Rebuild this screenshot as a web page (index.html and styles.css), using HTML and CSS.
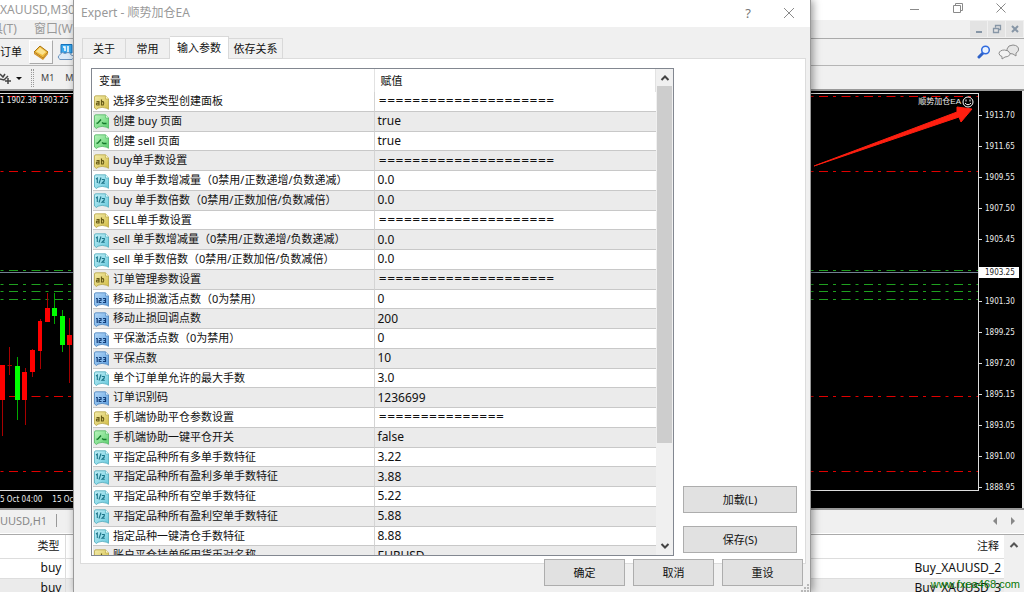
FILE: index.html
```html
<!DOCTYPE html>
<html lang="zh-CN">
<head>
<meta charset="utf-8">
<title>Expert - 顺势加仓EA</title>
<link rel="stylesheet" href="styles.css">
</head>
<body>
<svg class="defs" aria-hidden="true">
  <defs>
    <linearGradient id="gy" x2="1" y2="1"><stop offset="0" stop-color="#f3ecab"/><stop offset="1" stop-color="#d3bd45"/></linearGradient>
    <linearGradient id="gg" x2="1" y2="1"><stop offset="0" stop-color="#b9f5bd"/><stop offset="1" stop-color="#5fd070"/></linearGradient>
    <linearGradient id="gc" x2="1" y2="1"><stop offset="0" stop-color="#c3f0f7"/><stop offset="1" stop-color="#67c8dc"/></linearGradient>
    <linearGradient id="gb" x2="1" y2="1"><stop offset="0" stop-color="#b4d8f8"/><stop offset="1" stop-color="#5e9fe0"/></linearGradient>
    <path id="sheet" d="M.5 2Q.5.8 2 .8H11.5L14.5 4V14.3L12.5 13.2Q8 11.5 4 13.2L2.5 14.5L.5 13Z"/>
    <symbol id="i-str" viewBox="0 0 15 15"><use href="#sheet" fill="url(#gy)" stroke="#b5a343" stroke-width=".8"/><path d="M11.5.8V4H14.5" fill="#fff8c8" stroke="#b5a343" stroke-width=".6"/><path d="M2.5 6.5H5V10H3.2Q2 9.500 2.700 8.200H5M7.500 4.500V10H9.200Q10.500 8.500 9.200 6.600H7.500" fill="none" stroke="#665a18" stroke-width="1.2"/></symbol>
    <symbol id="i-bool" viewBox="0 0 15 15"><use href="#sheet" fill="url(#gg)" stroke="#4fb561" stroke-width=".8"/><path d="M11.500.800V4H14.500" fill="#d8ffdc" stroke="#4fb561" stroke-width=".6"/><path d="M2.500 9.500L4 9L7 5.500M8 8.500L9.500 9.500H12.500" fill="none" stroke="#157a2c" stroke-width="1.400"/></symbol>
    <symbol id="i-dbl" viewBox="0 0 15 15"><use href="#sheet" fill="url(#gc)" stroke="#4ba9bb" stroke-width=".8"/><path d="M11.500.800V4H14.500" fill="#e0fbff" stroke="#4ba9bb" stroke-width=".6"/><path d="M2 5L3.300 4V9M7 3.500L5 9.500M7.800 5.500H10.300V7L8 9.300H10.800" fill="none" stroke="#1c7488" stroke-width="1.100"/></symbol>
    <symbol id="i-int" viewBox="0 0 15 15"><use href="#sheet" fill="url(#gb)" stroke="#4781bd" stroke-width=".8"/><path d="M11.500.800V4H14.500" fill="#d8ecff" stroke="#4781bd" stroke-width=".6"/><path d="M2 6.500H3.200V11M5 6.500H7V8.500H5.200V10.500H7.500M9 6.500H11.500V10.500H9M9.500 8.500H11.500" fill="none" stroke="#143e78" stroke-width="1.200"/></symbol>
  </defs>
</svg>

<main class="app">
  <header class="titlebar">
    <span>XAUUSD,M30</span>
    <div class="winbtns">
      <button aria-label="最小化"><svg width="12" height="12"><path d="M1 7.500H10"/></svg></button>
      <button aria-label="还原"><svg width="12" height="12"><path d="M1.500 3.500H8.500V10.500H1.500ZM3.500 3V1.500H10.500V8.500H9"/></svg></button>
      <button aria-label="关闭"><svg width="12" height="12"><path d="M1.500 1.500L10.500 10.500M10.500 1.500L1.500 10.500"/></svg></button>
    </div>
  </header>
  <nav class="menubar">
    <div class="menus"><button class="cut">具(T)</button><button>窗口(W)</button></div>
    <div class="mdi">
      <button aria-label="最小化子窗口"><svg width="10" height="10"><path d="M2 8H8"/></svg></button>
      <button aria-label="还原子窗口"><svg width="10" height="10"><path d="M3.500 3.500V1.500H8.500V5.500H7M1.500 4.500H6.500V8.500H1.500Z" stroke-width="1.300"/></svg></button>
      <button aria-label="关闭子窗口"><svg width="10" height="10"><path d="M2 2L8 8M8 2L2 8"/></svg></button>
    </div>
  </nav>
  <div class="toolbar">
    <button>订单</button>
    <button class="framed" aria-label="市场"><svg width="18" height="18" viewBox="0 0 18 18"><path d="M2 9L8 3L16 9L11 15Z" fill="#f0bb3a" stroke="#a97312"/><path d="M4 8.500L8 4.500L14 9L10.500 12Z" fill="#fbe28e"/><path d="M2 9.500L11 15L16 9.500V11L11 17L2 11Z" fill="#d3942a"/></svg></button>
    <button aria-label="信号"><svg width="18" height="18" viewBox="0 0 18 18"><path d="M4 1.500H15V10H4Z" fill="#3aa8ec" stroke="#1673bd"/><path d="M6 4H8V8M11 3V9" stroke="#fff" stroke-width="1.500" fill="none"/><path d="M3 16.500Q-.5 14 3 11.500Q5 8 8 10.500Q13 8 14 12Q19 13 15 16.500Z" fill="#dcebf8" stroke="#6b93bd"/></svg></button>
    <span class="spacer"></span>
    <button aria-label="搜索"><svg width="14" height="14" viewBox="0 0 14 14"><path d="M2 12L6 8" stroke="#2f62c8" stroke-width="3" stroke-linecap="round"/><circle cx="8.500" cy="5" r="3.800" fill="#eaf3ff" stroke="#2f6ade" stroke-width="1.500"/></svg></button>
    <button aria-label="消息"><svg width="22" height="16" viewBox="0 0 22 16"><path d="M18 9V12L15 10Q8 9.500 9 5Q10 1 15 1Q21 1.500 20.500 6Q20 8 18 9Z" fill="#e6e6e6" stroke="#8c8c8c"/><path d="M4 12.500V15L7 13Q12 12.500 12 9.500Q11 6 6.500 6Q1.500 6 1 9.500Q1.500 12 4 12.500Z" fill="#f2f2f2" stroke="#8c8c8c"/></svg></button>
  </div>
  <div class="toolbar periods">
    <button aria-label="指标"><svg width="24" height="16" viewBox="0 0 24 16"><path d="M0 4L3 7L5 4M0 9L4 10L8 6M8 8V14M5 11H11" stroke="#444" stroke-width="1.500" fill="none"/><path d="M16 7H22L19 10Z" fill="#111"/></svg></button>
    <span class="grip"></span>
    <button>M1</button><button>M5</button>
  </div>

  <section class="chart">
    <div class="plot">
      <svg class="lines" width="100%" height="396">
        <g stroke="#e00000" stroke-dasharray="9 5 3 5.500" stroke-dashoffset="13.500">
          <path d="M0 2.500H4000"/><path d="M0 77.500H4000"/><path d="M0 302.500H4000"/><path d="M0 377.500H4000"/>
        </g>
        <g stroke="#1fa01f" stroke-dasharray="9 5 3 5.500" stroke-dashoffset="13.500">
          <path d="M0 176.500H4000"/><path d="M0 190.500H4000"/><path d="M0 197.500H4000"/><path d="M0 205.500H4000"/>
        </g>
        <path d="M0 178.500H4000" stroke="#708090"/>
        <g transform="translate(0 -94)">
          <path d="M2.500 365V436M9.500 347V375M7.500 365.500H12M25.500 368V425M32.500 349V377M40.500 319V369M47.500 293V308M69.500 318V383" stroke="#a80000"/>
          <path d="M17.500 357V420M54.500 293V324M62.500 310V352" stroke="#00a800"/>
          <path d="M0 365H5V400H0ZM22 372H27V400H22ZM30 350H35V372H30ZM38 321H42V351H38ZM45 308H50V322H45ZM67 335H72V345H67Z" fill="#f00"/>
          <path d="M15 366H20V400H15ZM52 308H57V316H52ZM60 316H65V345H60Z" fill="#0f0"/>
        </g>
      </svg>
      <span class="quote">1 1902.38 1903.25</span>
      <span class="ea">顺势加仓EA <svg width="12" height="12" viewBox="0 0 12 12"><circle cx="6" cy="6" r="5" fill="none" stroke="#fff"/><path d="M4 3.500V5.500M8 3.500V5.500M3 7Q6 10.500 9 7" stroke="#fff" fill="none"/></svg></span>
      <svg class="arrow" width="170" height="80"><path d="M6 72L149 18L149 13L164 15L153 28L151 23Z" fill="#ff1f10" stroke="#ff1f10"/></svg>
    </div>
    <ol class="prices">
      <li>1913.70</li><li>1911.65</li><li>1909.55</li><li>1907.50</li><li>1905.45</li>
      <li class="now"><b>1903.25</b></li>
      <li>1901.30</li><li>1899.25</li><li>1897.20</li><li>1895.15</li><li>1893.05</li><li>1891.00</li><li>1888.95</li>
    </ol>
    <div class="times"><span>5 Oct 04:00</span><span>15 Oct</span></div>
  </section>

  <div class="charttabs">
    <button>UUSD,H1</button><i></i><span class="spacer"></span>
    <svg width="26" height="10"><path d="M4 1V9L0 5ZM18 1V9L22 5Z" fill="#888"/></svg>
  </div>
  <section class="orders">
    <table>
      <thead><tr><th class="type">类型</th><th>注释</th></tr></thead>
      <tbody>
        <tr><td class="type">buy</td><td>Buy_XAUUSD_2</td></tr>
        <tr><td class="type">buy</td><td>Buy_XAUUSD_3</td></tr>
      </tbody>
    </table>
    <div class="oscroll"><svg width="10" height="8"><path d="M1.500 6L5 2.500L8.500 6" fill="none" stroke="#555" stroke-width="2"/></svg></div>
  </section>
</main>

<section class="dialog" role="dialog" aria-label="Expert - 顺势加仓EA">
  <header class="dtitle">
    <h1>Expert - 顺势加仓EA</h1>
    <button aria-label="帮助">?</button>
    <button aria-label="关闭"><svg width="12" height="12"><path d="M1 1L11 11M11 1L1 11"/></svg></button>
  </header>
  <div class="tabs" role="tablist">
    <button role="tab">关于</button><button role="tab">常用</button><button role="tab" class="on" aria-selected="true">输入参数</button><button role="tab">依存关系</button>
  </div>
  <div class="panel">
    <div class="listbox">
      <div class="view">
        <table class="params">
          <thead><tr><th>变量</th><th>赋值</th></tr></thead>
          <tbody>
            <tr><td><svg><use href="#i-str"/></svg>选择多空类型创建面板</td><td class="eq">=====================</td></tr>
            <tr><td><svg><use href="#i-bool"/></svg>创建 buy 页面</td><td>true</td></tr>
            <tr><td><svg><use href="#i-bool"/></svg>创建 sell 页面</td><td>true</td></tr>
            <tr><td><svg><use href="#i-str"/></svg>buy单手数设置</td><td class="eq">=====================</td></tr>
            <tr><td><svg><use href="#i-dbl"/></svg>buy 单手数增减量（0禁用/正数递增/负数递减）</td><td>0.0</td></tr>
            <tr><td><svg><use href="#i-dbl"/></svg>buy 单手数倍数（0禁用/正数加倍/负数减倍）</td><td>0.0</td></tr>
            <tr><td><svg><use href="#i-str"/></svg>SELL单手数设置</td><td class="eq">=====================</td></tr>
            <tr><td><svg><use href="#i-dbl"/></svg>sell 单手数增减量（0禁用/正数递增/负数递减）</td><td>0.0</td></tr>
            <tr><td><svg><use href="#i-dbl"/></svg>sell 单手数倍数（0禁用/正数加倍/负数减倍）</td><td>0.0</td></tr>
            <tr><td><svg><use href="#i-str"/></svg>订单管理参数设置</td><td class="eq">=====================</td></tr>
            <tr><td><svg><use href="#i-int"/></svg>移动止损激活点数（0为禁用）</td><td>0</td></tr>
            <tr><td><svg><use href="#i-int"/></svg>移动止损回调点数</td><td>200</td></tr>
            <tr><td><svg><use href="#i-int"/></svg>平保激活点数（0为禁用）</td><td>0</td></tr>
            <tr><td><svg><use href="#i-int"/></svg>平保点数</td><td>10</td></tr>
            <tr><td><svg><use href="#i-dbl"/></svg>单个订单单允许的最大手数</td><td>3.0</td></tr>
            <tr><td><svg><use href="#i-int"/></svg>订单识别码</td><td>1236699</td></tr>
            <tr><td><svg><use href="#i-str"/></svg>手机端协助平仓参数设置</td><td class="eq">===============</td></tr>
            <tr><td><svg><use href="#i-bool"/></svg>手机端协助一键平仓开关</td><td>false</td></tr>
            <tr><td><svg><use href="#i-dbl"/></svg>平指定品种所有多单手数特征</td><td>3.22</td></tr>
            <tr><td><svg><use href="#i-dbl"/></svg>平指定品种所有盈利多单手数特征</td><td>3.88</td></tr>
            <tr><td><svg><use href="#i-dbl"/></svg>平指定品种所有空单手数特征</td><td>5.22</td></tr>
            <tr><td><svg><use href="#i-dbl"/></svg>平指定品种所有盈利空单手数特征</td><td>5.88</td></tr>
            <tr><td><svg><use href="#i-dbl"/></svg>指定品种一键清仓手数特征</td><td>8.88</td></tr>
            <tr><td><svg><use href="#i-str"/></svg>账户平仓挂单所用货币对名称</td><td>EURUSD</td></tr>
          </tbody>
        </table>
      </div>
      <div class="scroll">
        <svg width="10" height="8"><path d="M1.500 6L5 2.500L8.500 6"/></svg>
        <div class="track"><div class="thumb"></div></div>
        <svg width="10" height="8"><path d="M1.500 2L5 5.500L8.500 2"/></svg>
      </div>
    </div>
    <div class="side"><button class="btn">加载(L)</button><button class="btn">保存(S)</button></div>
  </div>
  <footer class="actions"><button class="btn">确定</button><button class="btn">取消</button><button class="btn">重设</button></footer>
  <svg class="sizer" width="8" height="8"><path d="M6 0h2v2h-2zM3 3h2v2h-2zM6 3h2v2h-2zM0 6h2v2h-2zM3 6h2v2h-2zM6 6h2v2h-2z" fill="#b8b8b8"/></svg>
</section>
<span class="watermark">www.fxea468.com</span>
</body>
</html>
```
FILE: styles.css
```css
* { box-sizing: border-box; }
body {
  margin: 0;
  height: 100vh;
  overflow: hidden;
  position: relative;
  background: #f0f0f0;
  color: #111;
  font: 11px/16px "Noto Sans", "Noto Sans CJK SC", sans-serif;
}
button {
  font: inherit;
  color: inherit;
  background: none;
  border: 0;
  padding: 0;
  white-space: nowrap;
}
svg { flex: none; }
.defs { position: absolute; width: 0; height: 0; }
.spacer { flex: 1; }

.app { display: flex; flex-direction: column; }
.titlebar {
  display: flex;
  justify-content: space-between;
  align-items: center;
  height: 20px;
  background: #fff;
  color: #999;
  font-size: 12px;
}
.winbtns { display: flex; gap: 31px; padding: 0 17px 4px 0; }
.winbtns button { display: flex; }
.winbtns svg, .dtitle svg { fill: none; stroke: #8a8a8a; }
.menubar {
  display: flex;
  justify-content: space-between;
  height: 19px;
  border-bottom: 1px solid #aaa;
  color: #999;
}
.menus { display: flex; gap: 17px; font-size: 12px; }
.menus .cut { margin-left: -9px; }
.mdi { display: flex; gap: 1px; padding: 1px; }
.mdi button { display: grid; place-items: center; width: 17px; background: #e3e3e3; }
.mdi svg { fill: none; stroke: #8796a6; stroke-width: 2; }
.toolbar {
  display: flex;
  align-items: center;
  gap: 7px;
  height: 27px;
  padding-right: 4px;
  border-bottom: 1px solid #b5b5b5;
}
.toolbar button { display: flex; }
.toolbar .framed { padding: 2px; border: 1px solid #ccc; border-color: #fff #aaa #aaa #fff; background: #f6f6f6; }
.toolbar .framed + button { margin-left: -3px; }
.toolbar.periods { height: 25px; border-bottom: 2px solid #999; font-size: 9px; color: #444; }
.grip { width: 3px; height: 18px; border: 1px dotted #999; border-width: 0 1px; }
.periods button + button { margin-left: 4px; }

.chart {
  display: grid;
  grid-template-columns: 1fr 43px;
  grid-template-rows: 398px 17px;
  margin-right: 2px;
  padding-top: 2px;
  background: #000;
  color: #eee;
  font: 8px/12px "DejaVu Sans Condensed", "Noto Sans CJK SC", sans-serif;
}
.plot { position: relative; border: 1px solid #ddd; border-left: 0; overflow: hidden; }
.lines { display: block; stroke-width: 1; }
.quote { position: absolute; left: 0; top: 1px; }
.ea { position: absolute; right: 4px; top: 2px; display: flex; gap: 1px; font-family: "Liberation Sans", "Noto Sans CJK SC", sans-serif; font-size: 8px; }
.arrow { position: absolute; right: 0; top: 0; }
.prices { display: grid; grid-auto-rows: 31px; margin: 0; padding: 7px 0 0; height: 398px; list-style: none; }
.prices li { display: flex; align-items: center; gap: 3px; }
.prices li::before { content: ""; width: 3px; height: 1px; background: #ddd; }
.prices .now { padding-top: 4px; }
.prices .now::before { display: none; }
.prices b { padding: 0 4px 0 6px; background: #fff; color: #222; font-weight: normal; line-height: 11px; }
.times { grid-column: 1 / -1; display: flex; gap: 10px; padding-top: 3px; }

.charttabs { display: flex; align-items: center; height: 26px; padding: 0 5px 2px 0; border-top: 2px solid #999; border-bottom: 1px solid #fff; color: #888; }
.charttabs i { width: 1px; height: 13px; margin-left: 9px; background: #999; }
.orders { display: flex; border-top: 1px solid #aaa; background: #fff; }
.orders table { flex: 1; border-collapse: collapse; }
.orders th, .orders td { height: 20px; padding: 0 3px; border-bottom: 1px solid #ddd; text-align: right; font-size: 12px; font-weight: normal; line-height: 18px; }
.orders th { height: 23px; padding-right: 5px; font-size: 11px; }
.orders .type { width: 65px; border-right: 1px solid #ddd; }
.orders tbody tr:nth-child(2) { background: #ebebeb; }
.oscroll { width: 20px; padding: 2px 5px; background: #f0f0f0; }

.dialog {
  position: absolute;
  left: 73px;
  top: 0;
  width: 738px;
  min-height: 100%;
  background: #f0f0f0;
  border: solid #999;
  border-width: 0 1px;
  box-shadow: 2px 0 8px #0006;
}
.dtitle { display: flex; align-items: center; gap: 32px; height: 27px; padding: 0 15px 2px 7px; background: #fff; color: #999; }
.dtitle h1 { flex: 1; margin: 0; font-size: 12px; font-weight: normal; }
.dtitle button { display: flex; font-size: 13px; color: #777; }
.tabs { display: flex; align-items: flex-end; height: 32px; padding-left: 8px; position: relative; margin-bottom: -1px; }
.tabs button { height: 21px; width: 44px; border: 1px solid #d9d9d9; border-left-width: 0; }
.tabs button:first-child { border-left-width: 1px; }
.tabs button:nth-child(n+3) { width: 59px; }
.tabs button:last-child { width: 54px; }
.tabs .on { height: 23px; background: #fff; border-bottom: 0; }
.panel { display: flex; gap: 9px; margin: 0 4px 0 6px; padding: 9px 8px 7px 10px; background: #fff; border: 1px solid #dcdcdc; }
.listbox { display: flex; flex: 1; height: 488px; border: 1px solid #828790; }
.view { flex: 1; overflow: hidden; padding-left: 1px; }
.params { width: 100%; height: 497px; table-layout: fixed; border-collapse: separate; border-spacing: 0; }
.params th { height: 23px; padding: 0 6px; text-align: left; font-weight: normal; border-right: 1px solid #e2e2e2; }
.params td { padding: 0 3px; white-space: nowrap; border-bottom: 1px solid #c8c8c8; border-right: 1px solid #d4d4d4; font-size: 12px; line-height: 16px; }
.params td:first-child { padding-left: 1px; font-size: 11px; }
.params td:last-child { border-right: 0; }
.params td.eq { padding-left: 4px; font-family: "DejaVu Sans", sans-serif; font-size: 10px; }
.params tbody tr:nth-child(even) { background: #ebebeb; }
.params svg { width: 15px; height: 15px; margin-right: 4px; vertical-align: middle; }
.scroll { display: flex; flex-direction: column; align-items: center; width: 17px; padding: 5px 1px; gap: 4px; background: #f0f0f0; }
.scroll path { fill: none; stroke: #444; stroke-width: 2; }
.track { flex: 1; width: 100%; }
.thumb { height: 79%; background: #cdcdcd; }
.btn { height: 27px; border: 1px solid #adadad; background: #e1e1e1; }
.side { display: flex; flex-direction: column; justify-content: flex-end; gap: 13px; width: 114px; padding-bottom: 3px; }
.actions { position: relative; display: flex; justify-content: flex-end; gap: 8px; margin-top: -5px; padding-right: 7px; }
.actions .btn { width: 81px; }
.sizer { position: absolute; right: 1px; bottom: 0; }
.watermark { position: absolute; right: 4px; bottom: 1px; color: #087808; font: 11px/14px "Liberation Sans", sans-serif; }
```
